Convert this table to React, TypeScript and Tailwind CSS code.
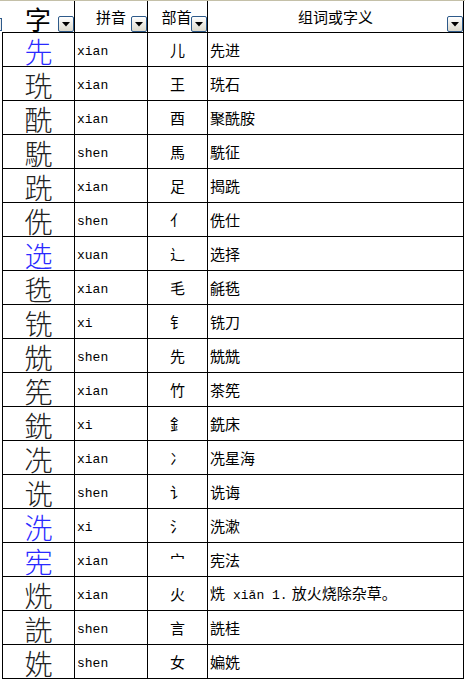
import React from "react";

type Row = { c: string; py: string; r: string; w: React.ReactNode; blue?: boolean };

const mono = { fontFamily: '"Liberation Mono", "Noto Sans CJK SC", monospace' };
const cjk = { fontFamily: '"Noto Sans CJK SC", "Noto Sans", sans-serif' };

const rows: Row[] = [
  { c: "先", py: "xian", r: "儿", w: "先进", blue: true },
  { c: "珗", py: "xian", r: "王", w: "珗石" },
  { c: "酰", py: "xian", r: "酉", w: "聚酰胺" },
  { c: "駪", py: "shen", r: "馬", w: "駪征" },
  { c: "跣", py: "xian", r: "足", w: "揭跣" },
  { c: "侁", py: "shen", r: "亻", w: "侁仕" },
  { c: "选", py: "xuan", r: "辶", w: "选择", blue: true },
  { c: "毨", py: "xian", r: "毛", w: "毹毨" },
  { c: "铣", py: "xi", r: "钅", w: "铣刀" },
  { c: "兟", py: "shen", r: "先", w: "兟兟" },
  { c: "筅", py: "xian", r: "竹", w: "茶筅" },
  { c: "銑", py: "xi", r: "釒", w: "銑床" },
  { c: "冼", py: "xian", r: "冫", w: "冼星海" },
  { c: "诜", py: "shen", r: "讠", w: "诜诲" },
  { c: "洗", py: "xi", r: "氵", w: "洗漱", blue: true },
  { c: "宪", py: "xian", r: "宀", w: "宪法", blue: true },
  {
    c: "烍",
    py: "xian",
    r: "火",
    w: (
      <>
        <span>烍</span>
        <span className="text-[13px] ml-[8px] mr-[4px]" style={mono}>xiǎn 1.</span>
        <span>放火烧除杂草。</span>
      </>
    ),
  },
  { c: "詵", py: "shen", r: "言", w: "詵桂" },
  { c: "姺", py: "shen", r: "女", w: "媥姺" },
];

function DropBtn() {
  return (
    <div className="w-[16px] h-[16px] rounded-[2px] border border-[#2e5a8a] bg-gradient-to-b from-white to-[#dcd9cc] flex items-center justify-center shrink-0">
      <svg width="8" height="5" viewBox="0 0 8 5">
        <polygon points="0,0 8,0 4,4.5" fill="#000" />
      </svg>
    </div>
  );
}

export default function App() {
  return (
    <div className="w-[465px] h-[680px] bg-white overflow-hidden text-black" style={cjk}>
      {/* header */}
      <div className="flex h-[33px] border-t border-[#c4c0a8]">
        <div className="w-[2px] h-full flex items-end pb-[2px]">
          <div className="w-[2px] h-[13px] border-r border-y border-[#2e5a8a] bg-[#eeeeee]" />
        </div>
        <div className="w-[73px] border-r border-b border-black relative flex items-center justify-center">
          <span className="text-[26px] leading-[26px] mt-[4px]">字</span>
          <div className="absolute right-0 bottom-0">
            <DropBtn />
          </div>
        </div>
        <div className="w-[73px] border-r border-b border-black relative flex items-center justify-center">
          <span className="text-[15px] leading-none mb-[1px]">拼音</span>
          <div className="absolute right-0 bottom-0">
            <DropBtn />
          </div>
        </div>
        <div className="w-[60px] border-r border-b border-black relative flex items-center justify-center">
          <span className="text-[15px] leading-none mb-[1px] mr-[2px]">部首</span>
          <div className="absolute right-0 bottom-0">
            <DropBtn />
          </div>
        </div>
        <div className="w-[256px] border-r border-b border-black relative flex items-center justify-center">
          <span className="text-[15px] leading-none mb-[1px]">组词或字义</span>
          <div className="absolute right-0 bottom-0">
            <DropBtn />
          </div>
        </div>
      </div>
      {/* body */}
      <div className="ml-[2px] border-l border-black w-[462px]">
        {rows.map((row, i) => (
          <div key={i} className="flex h-[34px] border-b border-black">
            <div className="w-[72px] border-r border-black flex items-center justify-center">
              <span
                className={
                  "text-[28px] leading-[28px] mt-[3px] font-light " +
                  (row.blue ? "text-[#2a2aff]" : "text-[#222222]")
                }
              >
                {row.c}
              </span>
            </div>
            <div className="w-[73px] border-r border-black flex items-center pl-[2px] pt-[3px]">
              <span className="text-[13px] leading-none" style={mono}>
                {row.py}
              </span>
            </div>
            <div className="w-[60px] border-r border-black flex items-center justify-center">
              <span className="text-[15px] leading-none">{row.r}</span>
            </div>
            <div className="w-[256px] border-r border-black flex items-center pl-[2px]">
              <span className="text-[15px] leading-none whitespace-pre">{row.w}</span>
            </div>
          </div>
        ))}
      </div>
    </div>
  );
}
